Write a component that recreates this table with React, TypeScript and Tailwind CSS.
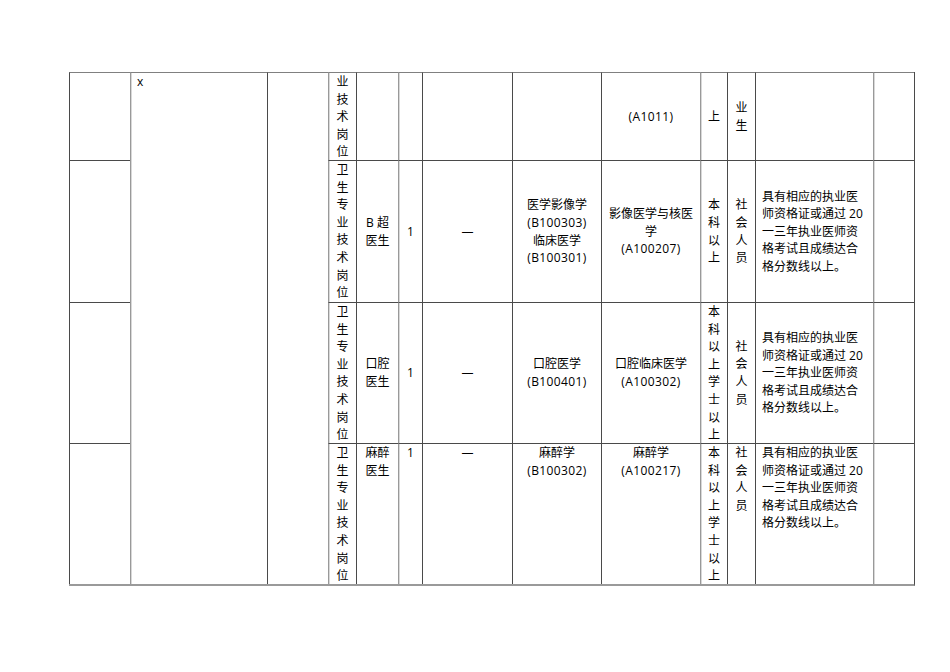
import React from "react";

const L = [
  "border-l border-l-[#4a4a4a]",
  "border-l border-l-[#999999] shadow-[inset_1px_0_0_#d8d8d8]",
  "border-l border-l-[#4a4a4a]",
  "border-l border-l-[#999999] shadow-[inset_1px_0_0_#d8d8d8]",
  "border-l border-l-[#4a4a4a]",
  "border-l border-l-[#999999] shadow-[inset_1px_0_0_#d8d8d8]",
  "border-l border-l-[#4a4a4a]",
  "border-l border-l-[#4a4a4a]",
  "border-l border-l-[#4a4a4a]",
  "border-l border-l-[#999999] shadow-[inset_1px_0_0_#d8d8d8]",
  "border-l border-l-[#4a4a4a]",
  "border-l border-l-[#4a4a4a]",
  "border-l border-l-[#999999] shadow-[inset_1px_0_0_#d8d8d8]",
];

type CellProps = {
  c: number;
  first?: boolean;
  align?: "center" | "top" | "topleft" | "left" | "topleftpad";
  span?: boolean;
  children?: React.ReactNode;
};

function Cell({ c, first, align = "center", span, children }: CellProps) {
  const top = first ? "border-t border-t-[#808080]" : "border-t border-t-[#4a4a4a]";
  let a = "flex flex-col items-center justify-center text-center";
  if (align === "top") a = "flex flex-col items-center justify-start text-center";
  if (align === "topleft") a = "flex flex-col items-start justify-start text-left pl-[6px]";
  if (align === "left") a = "flex flex-col items-start justify-center text-left pl-[6px]";
  if (align === "topleftpad") a = "flex flex-col items-start justify-start text-left pl-[6px]";
  return (
    <div className={`${L[c]} ${top} ${a} ${span ? "row-span-4" : ""} overflow-hidden`}>
      {children}
    </div>
  );
}

function V({ s }: { s: string }) {
  return (
    <>
      {Array.from(s).map((ch, i) => (
        <div key={i}>{ch}</div>
      ))}
    </>
  );
}

function Lines({ lines }: { lines: string[] }) {
  return (
    <>
      {lines.map((l, i) => (
        <div key={i} className="whitespace-pre">
          {l}
        </div>
      ))}
    </>
  );
}

const desc = ["具有相应的执业医", "师资格证或通过 20", "一三年执业医师资", "格考试且成绩达合", "格分数线以上。"];

export default function App() {
  return (
    <div
      className="min-h-[672px] w-[950px] bg-white pt-[72px] pl-[69px] text-[12px] leading-[17.6px] text-black"
      style={{ fontFamily: '"Open Sans", "Noto Sans CJK SC", sans-serif' }}
    >
      <div className="grid w-[846px] grid-cols-[61px_137px_61px_28px_42px_24px_90px_89px_99px_27px_28px_118px_41px] grid-rows-[88px_142px_141px_141px] border-r border-r-[#4a4a4a] border-b-2 border-b-[#9a9a9a]">
        {/* Row 1 */}
        <Cell c={0} first />
        <Cell c={1} first span align="topleft">
          <div>x</div>
        </Cell>
        <Cell c={2} first span />
        <Cell c={3} first align="top">
          <V s="业技术岗位" />
        </Cell>
        <Cell c={4} first />
        <Cell c={5} first />
        <Cell c={6} first />
        <Cell c={7} first />
        <Cell c={8} first>
          <div className="tracking-[0.4px]">(A1011)</div>
        </Cell>
        <Cell c={9} first>
          <div>上</div>
        </Cell>
        <Cell c={10} first>
          <V s="业生" />
        </Cell>
        <Cell c={11} first />
        <Cell c={12} first />

        {/* Row 2 */}
        <Cell c={0} />
        <Cell c={3} align="top">
          <V s="卫生专业技术岗位" />
        </Cell>
        <Cell c={4}>
          <Lines lines={["B 超", "医生"]} />
        </Cell>
        <Cell c={5}>
          <div>1</div>
        </Cell>
        <Cell c={6}>
          <div>—</div>
        </Cell>
        <Cell c={7}>
          <div>医学影像学</div>
          <div className="tracking-[0.4px]">(B100303)</div>
          <div>临床医学</div>
          <div className="tracking-[0.4px]">(B100301)</div>
        </Cell>
        <Cell c={8}>
          <div>影像医学与核医</div>
          <div>学</div>
          <div className="tracking-[0.4px]">(A100207)</div>
        </Cell>
        <Cell c={9}>
          <V s="本科以上" />
        </Cell>
        <Cell c={10}>
          <V s="社会人员" />
        </Cell>
        <Cell c={11} align="left">
          <Lines lines={desc} />
        </Cell>
        <Cell c={12} />

        {/* Row 3 */}
        <Cell c={0} />
        <Cell c={3} align="top">
          <V s="卫生专业技术岗位" />
        </Cell>
        <Cell c={4}>
          <Lines lines={["口腔", "医生"]} />
        </Cell>
        <Cell c={5}>
          <div>1</div>
        </Cell>
        <Cell c={6}>
          <div>—</div>
        </Cell>
        <Cell c={7}>
          <div>口腔医学</div>
          <div className="tracking-[0.4px]">(B100401)</div>
        </Cell>
        <Cell c={8}>
          <div>口腔临床医学</div>
          <div className="tracking-[0.4px]">(A100302)</div>
        </Cell>
        <Cell c={9} align="top">
          <V s="本科以上学士以上" />
        </Cell>
        <Cell c={10}>
          <V s="社会人员" />
        </Cell>
        <Cell c={11} align="left">
          <Lines lines={desc} />
        </Cell>
        <Cell c={12} />

        {/* Row 4 */}
        <Cell c={0} />
        <Cell c={3} align="top">
          <V s="卫生专业技术岗位" />
        </Cell>
        <Cell c={4} align="top">
          <Lines lines={["麻醉", "医生"]} />
        </Cell>
        <Cell c={5} align="top">
          <div>1</div>
        </Cell>
        <Cell c={6} align="top">
          <div>—</div>
        </Cell>
        <Cell c={7} align="top">
          <div>麻醉学</div>
          <div className="tracking-[0.4px]">(B100302)</div>
        </Cell>
        <Cell c={8} align="top">
          <div>麻醉学</div>
          <div className="tracking-[0.4px]">(A100217)</div>
        </Cell>
        <Cell c={9} align="top">
          <V s="本科以上学士以上" />
        </Cell>
        <Cell c={10} align="top">
          <V s="社会人员" />
        </Cell>
        <Cell c={11} align="topleftpad">
          <Lines lines={desc} />
        </Cell>
        <Cell c={12} />
      </div>
    </div>
  );
}
